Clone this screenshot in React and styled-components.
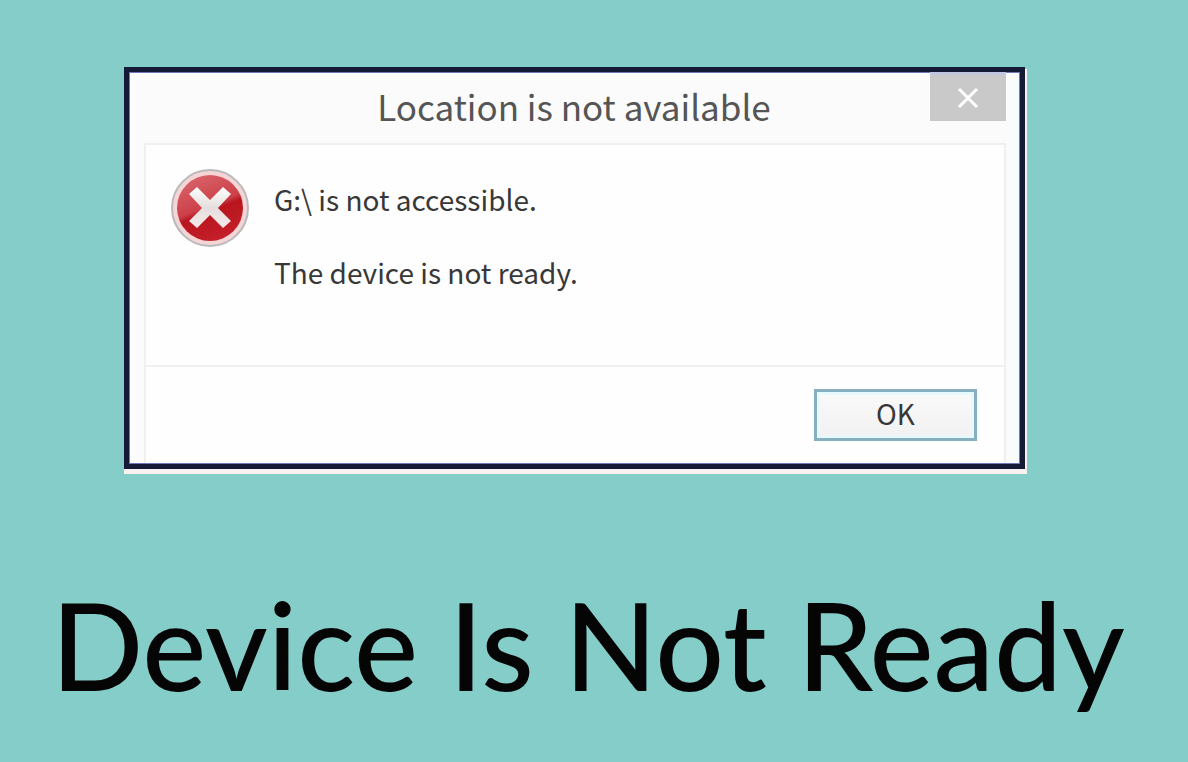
import React from "react";
import styled, { createGlobalStyle } from "styled-components";

const GlobalStyle = createGlobalStyle`
  * { box-sizing: border-box; }
  body {
    margin: 0;
    background: #84cdc9;
    font-family: "Noto Sans CJK SC", "Open Sans", sans-serif;
  }
`;

const Page = styled.main`
  min-height: 100vh;
  padding: 67px 163px 0 124px;
`;

const Dialog = styled.section`
  display: flex;
  flex-direction: column;
  padding: 0 14px 1px 15px;
  border: 5px solid #151a37;
  background: linear-gradient(90deg, #fdfdff, #fbfbfb 12px, #fbfbfb calc(100% - 12px), #f5fcff);
  box-shadow: inset 0 0 0 1px #7078bb, 2px 2px 0 #f7f1ef, 2px 5px 0 #f7f1ef, 0 5px 0 #f7f1ef;
`;

const TitleBar = styled.header`
  display: grid;
  grid-template-columns: 1fr 76px;
  align-items: start;
  height: 71px;
`;

const Title = styled.h1`
  margin: 0;
  padding: 9px 0 0 74px;
  font-size: 35px;
  line-height: 50px;
  font-weight: 400;
  text-align: center;
  color: #555;
`;

const CloseButton = styled.button`
  display: flex;
  align-items: center;
  justify-content: center;
  height: 49px;
  padding: 0;
  border: 0;
  border-top: 3px solid #c0c7df;
  background: #c9c9c9;
`;

const Panel = styled.div`
  border: 2px solid #f0f0f0;
  border-bottom: 0;
  background: #fefefe;
`;

const Message = styled.div`
  display: flex;
  gap: 24px;
  height: 220px;
  padding: 24px;
`;

const Lines = styled.div`
  display: flex;
  flex-direction: column;
  gap: 33px;
  padding-top: 10px;
`;

const Line = styled.p`
  margin: 0;
  font-size: 28px;
  line-height: 40px;
  color: #383838;
`;

const Actions = styled.footer`
  display: flex;
  justify-content: flex-end;
  padding: 22px 27px;
  border-top: 2px solid #f0f0f0;
`;

const OkButton = styled.button`
  width: 163px;
  height: 52px;
  padding: 0 0 4px;
  border: 3px solid #86b0bf;
  background: linear-gradient(#fafafa, #f1f1f1);
  box-shadow: inset 0 0 0 3px #e6f9ff;
  font-family: inherit;
  font-size: 28px;
  line-height: 40px;
  color: #383838;
`;

const Caption = styled.h2`
  margin: 86px -163px 0 -124px;
  padding-right: 12px;
  font-family: Lato, "Open Sans", sans-serif;
  font-size: 121px;
  line-height: 180px;
  font-weight: 500;
  text-align: center;
  white-space: nowrap;
  color: #050505;
`;

function ErrorIcon() {
  return (
    <svg width="80" height="80" viewBox="0 0 80 80" aria-hidden="true">
      <defs>
        <linearGradient id="red" x1="0.25" y1="0" x2="0.65" y2="1">
          <stop offset="0" stopColor="#d9646b" />
          <stop offset="0.48" stopColor="#cc4049" />
          <stop offset="0.56" stopColor="#b8151f" />
          <stop offset="1" stopColor="#c6202a" />
        </linearGradient>
        <linearGradient id="cross" x1="0" y1="0" x2="0" y2="1">
          <stop offset="0" stopColor="#fff" />
          <stop offset="0.5" stopColor="#e5dede" />
          <stop offset="1" stopColor="#f6eaea" />
        </linearGradient>
      </defs>
      <circle cx="40" cy="39" r="38" fill="#f5d5d5" stroke="#bababa" strokeWidth="2" />
      <circle cx="40" cy="39" r="33" fill="url(#red)" />
      <path
        d="M27 18 40 31 53 18 61 25 48 39 61 52 53 59 40 46 27 59 19 52 32 39 19 25Z"
        fill="url(#cross)"
      />
    </svg>
  );
}

export default function App() {
  return (
    <>
      <GlobalStyle />
      <Page>
        <Dialog role="dialog" aria-labelledby="dialog-title">
          <TitleBar>
            <Title id="dialog-title">Location is not available</Title>
            <CloseButton type="button" aria-label="Close">
              <svg width="22" height="20" viewBox="0 0 22 20" aria-hidden="true">
                <path d="M2 1 20 19M20 1 2 19" stroke="#fff" strokeWidth="3" />
              </svg>
            </CloseButton>
          </TitleBar>
          <Panel>
            <Message>
              <ErrorIcon />
              <Lines>
                <Line>G:\ is not accessible.</Line>
                <Line>The device is not ready.</Line>
              </Lines>
            </Message>
            <Actions>
              <OkButton type="button">OK</OkButton>
            </Actions>
          </Panel>
        </Dialog>
        <Caption>Device Is Not Ready</Caption>
      </Page>
    </>
  );
}
